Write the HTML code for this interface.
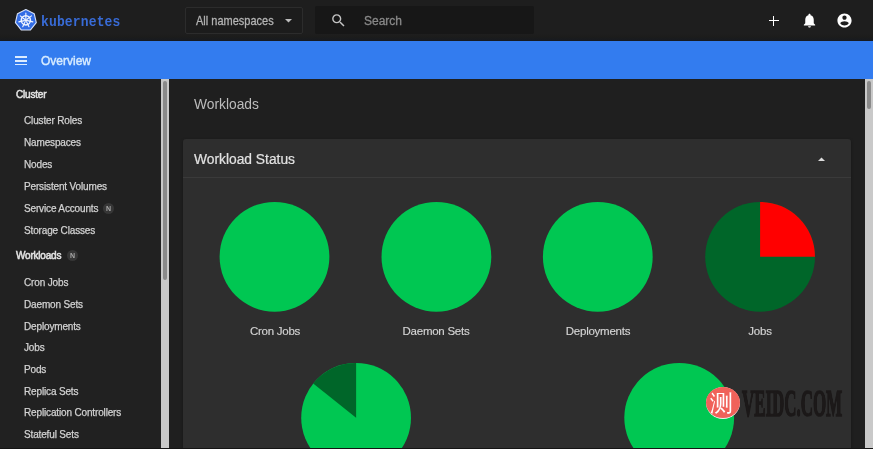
<!DOCTYPE html>
<html><head><meta charset="utf-8">
<style>
*{box-sizing:border-box;margin:0;padding:0}
html,body{width:873px;height:449px;overflow:hidden;background:#1f1f1f;font-family:"Liberation Sans",sans-serif;-webkit-font-smoothing:antialiased}
.abs{position:absolute}
#top{left:0;top:0;width:873px;height:41px;background:linear-gradient(#1e1e1e 0,#1e1e1e 34px,#1c1c1b 37px,#171a20 40.5px)}
#blue{left:0;top:41px;width:873px;height:38px;background:#337cef}
#side{left:0;top:79px;width:161px;height:370px;background:#212121}
#strack{left:161px;top:79px;width:8px;height:370px;background:#c9c9c9}
#sthumb{left:163px;top:81px;width:4px;height:199px;background:#8a8a8a;border-radius:2px}
#content{left:169px;top:79px;width:696px;height:370px;background:#1f1f1f}
#rtrack{left:865px;top:79px;width:8px;height:370px;background:#c9c9c9}
#rthumb{left:867px;top:81px;width:4px;height:28px;background:#8a8a8a;border-radius:2px}
#card{left:183px;top:139px;width:668px;height:320px;background:#2e2e2e;border-radius:3px;box-shadow:0 1px 3px rgba(0,0,0,.35)}
#cardhr{left:183px;top:177px;width:668px;height:1px;background:#3a3a3a}
.t{position:absolute;white-space:nowrap;line-height:1;will-change:transform}
.si{color:#d2d2d2;font-size:10px;letter-spacing:-0.15px;left:24px;-webkit-text-stroke:0.25px #d2d2d2}
.sh{color:#e4e4e4;font-size:10px;-webkit-text-stroke:0.5px #e4e4e4;left:16px;letter-spacing:-0.2px}
.badge{position:absolute;width:11px;height:11px;border-radius:50%;background:#363636;color:#a8a8a8;font-size:7px;font-weight:bold;text-align:center;line-height:11px;will-change:transform}
.lbl{color:#d4d4d4;font-size:11.5px;letter-spacing:-0.25px;-webkit-text-stroke:0.15px #d4d4d4;width:120px;text-align:center;top:326px}
</style></head>
<body>
<div id="top" class="abs"></div>
<div id="blue" class="abs"></div>
<div id="side" class="abs"></div>
<div id="content" class="abs"></div>
<div id="strack" class="abs"></div>
<div id="sthumb" class="abs"></div>
<div id="rtrack" class="abs"></div>
<div id="rthumb" class="abs"></div>
<div id="card" class="abs"></div>
<div id="cardhr" class="abs"></div>

<!-- top bar -->
<svg class="abs" style="left:0;top:0" width="50" height="40" viewBox="0 0 50 40">
  <polygon points="25.85,9.60 34.22,13.63 36.28,22.68 30.49,29.94 21.21,29.94 15.42,22.68 17.48,13.63" fill="#326ce5" stroke="#d8e2f8" stroke-width="1.1" stroke-linejoin="round"/>
  <g stroke="#f2f6ff" stroke-width="1.1" fill="none" stroke-linecap="round">
    <circle cx="25.85" cy="20.3" r="4.6" stroke-width="1.5"/>
    <line x1="25.85" y1="18.70" x2="25.85" y2="13.10"/><line x1="27.10" y1="19.30" x2="31.48" y2="15.81"/><line x1="27.41" y1="20.66" x2="32.87" y2="21.90"/><line x1="26.54" y1="21.74" x2="28.97" y2="26.79"/><line x1="25.16" y1="21.74" x2="22.73" y2="26.79"/><line x1="24.29" y1="20.66" x2="18.83" y2="21.90"/><line x1="24.60" y1="19.30" x2="20.22" y2="15.81"/>
  </g>
  <circle cx="25.85" cy="20.3" r="1.2" fill="#f2f6ff"/>
</svg>
<div class="t" style="left:41px;top:14.6px;font-family:'Liberation Mono',monospace;font-weight:bold;font-size:13px;color:#386bd6;letter-spacing:0.15px;transform:scaleY(1.1);transform-origin:0 0">kubernetes</div>

<div class="abs" style="left:185px;top:7px;width:118px;height:27px;border:1px solid #2c2c2c;border-radius:2px;background:#1c1c1c"></div>
<div class="t" style="left:196px;top:15px;font-size:11px;color:#b4b4b4;-webkit-text-stroke:0.25px #b4b4b4;transform:scaleY(1.08);transform-origin:0 0">All namespaces</div>
<svg class="abs" style="left:285px;top:19px" width="7" height="4"><polygon points="0,0 7,0 3.5,3.5" fill="#bdbdbd"/></svg>

<div class="abs" style="left:315px;top:6px;width:219px;height:28px;background:#171717;border-radius:2px"></div>
<svg class="abs" style="left:330px;top:12px" width="17" height="17" viewBox="0 0 24 24"><path d="M15.5 14h-.79l-.28-.27A6.471 6.471 0 0 0 16 9.5 6.5 6.5 0 1 0 9.5 16c1.61 0 3.09-.59 4.23-1.57l.27.28v.79l5 4.99L20.49 19l-4.99-5zm-6 0C7.01 14 5 11.99 5 9.5S7.01 5 9.5 5 14 7.01 14 9.5 11.99 14 9.5 14z" fill="#c4c4c4"/></svg>
<div class="t" style="left:364px;top:15px;font-size:12px;color:#888;-webkit-text-stroke:0.3px #888">Search</div>

<div class="abs" style="left:768.6px;top:20px;width:10.3px;height:1.4px;background:#fff"></div>
<div class="abs" style="left:773px;top:15.9px;width:1.4px;height:9.7px;background:#fff"></div>
<svg class="abs" style="left:800.7px;top:12.2px" width="17" height="17" viewBox="0 0 24 24"><path d="M12 22c1.1 0 2-.9 2-2h-4c0 1.1.89 2 2 2zm6-6v-5c0-3.070-1.64-5.640-4.5-6.32V4c0-.83-.67-1.5-1.5-1.5s-1.5.67-1.5 1.5v.68C7.630 5.36 6 7.92 6 11v5l-2 2v1h16v-1l-2-2z" fill="#fff"/></svg>
<svg class="abs" style="left:836.3px;top:12.2px" width="17" height="17" viewBox="0 0 24 24"><path d="M12 2C6.48 2 2 6.48 2 12s4.48 10 10 10 10-4.48 10-10S17.52 2 12 2zm0 3c1.660 0 3 1.34 3 3s-1.34 3-3 3-3-1.34-3-3 1.34-3 3-3zm0 14.2c-2.5 0-4.710-1.28-6-3.22.03-1.99 4-3.08 6-3.08 1.99 0 5.97 1.09 6 3.08-1.29 1.94-3.5 3.22-6 3.22z" fill="#fff"/></svg>

<!-- blue bar -->
<div class="abs" style="left:15.2px;top:55.8px;width:12.3px;height:1.9px;background:#dcecff"></div>
<div class="abs" style="left:15.2px;top:59.8px;width:12.3px;height:1.9px;background:#dcecff"></div>
<div class="abs" style="left:15.2px;top:63.6px;width:12.3px;height:1.9px;background:#dcecff"></div>
<div class="t" style="left:40.8px;top:55px;font-size:12px;-webkit-text-stroke:0.4px #d8ecff;color:#d8ecff">Overview</div>

<!-- sidebar -->
<div class="t sh" style="top:90px">Cluster</div>
<div class="t si" style="top:116px">Cluster Roles</div>
<div class="t si" style="top:138px">Namespaces</div>
<div class="t si" style="top:160px">Nodes</div>
<div class="t si" style="top:182px">Persistent Volumes</div>
<div class="t si" style="top:204px">Service Accounts</div>
<div class="badge" style="left:103px;top:202.5px">N</div>
<div class="t si" style="top:225.5px">Storage Classes</div>
<div class="t sh" style="top:251px">Workloads</div>
<div class="badge" style="left:67px;top:250px">N</div>
<div class="t si" style="top:277.5px">Cron Jobs</div>
<div class="t si" style="top:299.5px">Daemon Sets</div>
<div class="t si" style="top:321.5px">Deployments</div>
<div class="t si" style="top:342.5px">Jobs</div>
<div class="t si" style="top:364.5px">Pods</div>
<div class="t si" style="top:386.5px">Replica Sets</div>
<div class="t si" style="top:408.3px">Replication Controllers</div>
<div class="t si" style="top:430.3px">Stateful Sets</div>

<!-- content -->
<div class="t" style="left:194px;top:97.5px;font-size:13.8px;color:#bcbcbc">Workloads</div>
<div class="t" style="left:194px;top:152.5px;font-size:13.8px;color:#e2e2e2;-webkit-text-stroke:0.2px #e2e2e2">Workload Status</div>
<svg class="abs" style="left:818px;top:156.5px" width="7" height="5"><polygon points="0,4 7,4 3.5,0.5" fill="#dcdcdc"/></svg>

<svg class="abs" style="left:0;top:0" width="873" height="449">
  <circle cx="274.5" cy="256.8" r="54.9" fill="#00c752"/>
  <circle cx="436.4" cy="256.8" r="54.9" fill="#00c752"/>
  <circle cx="597.8" cy="256.8" r="54.9" fill="#00c752"/>
  <circle cx="760.1" cy="256.8" r="54.9" fill="#006629"/>
  <path d="M760.1 256.8 L760.1 201.9 A54.9 54.9 0 0 1 815 256.8 Z" fill="#ff0000"/>
  <circle cx="356.1" cy="417.8" r="54.9" fill="#00c752"/>
  <path d="M356.1 417.8 L356.1 362.9 A54.9 54.9 0 0 0 313.2 383.6 Z" fill="#006629"/>
  <circle cx="679.2" cy="417.8" r="54.9" fill="#00c752"/>
  <rect x="0" y="448" width="873" height="1" fill="#141414"/>
</svg>
<div class="t lbl" style="left:214.5px">Cron Jobs</div>
<div class="t lbl" style="left:376.4px">Daemon Sets</div>
<div class="t lbl" style="left:537.8px">Deployments</div>
<div class="t lbl" style="left:700.1px">Jobs</div>

<!-- watermark -->
<div class="abs" style="left:705.5px;top:387px;width:34px;height:32px;border-radius:50%;background:#f4f0ee"></div>
<div class="abs" style="left:705.5px;top:386.5px;width:34px;height:31px;border-radius:50%;background:#f0625a"></div>
<div class="t" style="left:710px;top:392px;font-size:23px;color:#fff;transform:scaleX(1.0)">测</div>
<div class="t" style="left:741.7px;top:384px;font-family:'Liberation Serif',serif;font-weight:bold;font-size:38px;color:#1c1919;-webkit-text-stroke:1.6px #1c1919;transform:scaleX(0.445);transform-origin:0 0">VEIDC.COM</div>
</body></html>
